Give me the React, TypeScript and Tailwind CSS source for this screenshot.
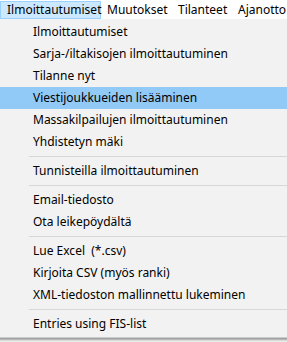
const items: (string | null)[] = [
  "Ilmoittautumiset",
  "Sarja-/iltakisojen ilmoittautuminen",
  "Tilanne nyt",
  "Viestijoukkueiden lisääminen",
  "Massakilpailujen ilmoittautuminen",
  "Yhdistetyn mäki",
  null,
  "Tunnisteilla ilmoittautuminen",
  null,
  "Email-tiedosto",
  "Ota leikepöydältä",
  null,
  "Lue Excel  (*.csv)",
  "Kirjoita CSV (myös ranki)",
  "XML-tiedoston mallinnettu lukeminen",
  null,
  "Entries using FIS-list",
];

export default function App() {
  return (
    <div className="w-[287px] h-[342px] bg-white overflow-hidden text-[12px] text-black" style={{ fontFamily: '"Noto Sans", sans-serif' }}>
      <div className="flex h-[19px] items-center bg-white whitespace-nowrap">
        <div className="h-[18px] w-[101px] shrink-0 border border-[#99d1ff] bg-[#cce8ff] flex items-center pl-[6px] leading-none">Ilmoittautumiset</div>
        <div className="w-[77px] shrink-0 pl-[6px] leading-none">Muutokset</div>
        <div className="w-[60px] shrink-0 leading-none">Tilanteet</div>
        <div className="shrink-0 leading-none">Ajanotto</div>
      </div>
      <div className="bg-[#f2f2f2] pt-[2px] pb-[2px] border-b border-[#cccccc]">
        {items.map((it, i) =>
          it === null ? (
            <div key={i} className="h-[7px] flex items-center pl-[29px]">
              <div className="h-px w-full bg-[#d7d7d7]" />
            </div>
          ) : (
            <div key={i} className={`h-[22px] flex items-center pl-[33px] whitespace-pre ${it === "Viestijoukkueiden lisääminen" ? "bg-[#91c9f7]" : ""}`}>
              {it}
            </div>
          )
        )}
      </div>
      <div className="h-px bg-[#a0a0a0]" />
      <div className="h-px bg-[#b8b8b8]" />
      <div className="h-px bg-[#d8d8d8]" />
      <div className="h-px bg-[#ededed]" />
    </div>
  );
}
